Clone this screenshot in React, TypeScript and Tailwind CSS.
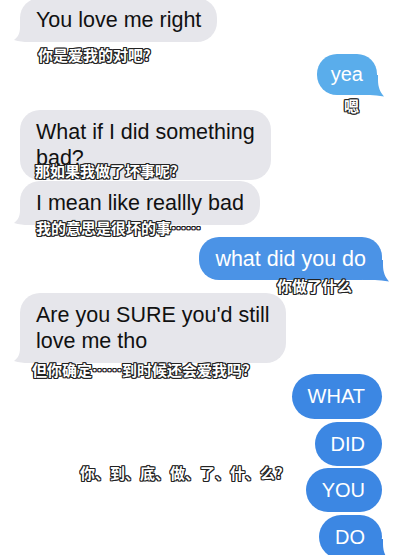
import React from 'react';

const caption =
  "relative z-10 font-bold text-white text-[15px] leading-4 whitespace-nowrap [font-family:'Noto_Sans_CJK_SC',sans-serif] [text-shadow:-1px_-1px_0_#222,1px_-1px_0_#222,-1px_1px_0_#222,1px_1px_0_#222,0_1px_0_#222,0_-1px_0_#222,1px_0_0_#222,-1px_0_0_#222]";

function LeftTail({ color }: { color: string }) {
  return (
    <svg className="absolute left-[-6px] bottom-0" width="26" height="20" viewBox="0 0 26 20">
      <path d="M6 0 H26 V20 H14 C10 20 5 19.5 0 18 C4 15 6 11 6 5 Z" fill={color} />
    </svg>
  );
}

function RightTail({ color }: { color: string }) {
  return (
    <svg className="absolute right-[-7px] bottom-[-2px]" width="26" height="22" viewBox="0 0 26 22">
      <path d="M20 0 H0 V20 H12 C16 20 21 21 26 21.5 C22 17 20 12 20 5 Z" fill={color} />
    </svg>
  );
}

function Received({ children, tail, className = '' }: { children: React.ReactNode; tail?: boolean; className?: string }) {
  return (
    <div className={`flex justify-start pl-[20px] ${className}`}>
      <div className="relative bg-[#e6e6eb] text-[#111] rounded-[20px] px-4 py-[9px] text-[21.5px] leading-[26px]">
        {tail && <LeftTail color="#e6e6eb" />}
        <span className="relative">{children}</span>
      </div>
    </div>
  );
}

export default function App() {
  return (
    <div className="w-[400px] h-[555px] overflow-hidden bg-white flex flex-col [font-family:'Liberation_Sans',Arial,sans-serif]">
      <Received tail className="mt-[-2px]">You love me right</Received>
      <div className={`${caption} mt-[5px] pl-[38px]`}>你是爱我的对吧?</div>

      <div className="flex justify-end pr-[23px] mt-[-9px]">
        <div className="relative bg-[#5aadeb] text-white rounded-[20px] px-[14px] py-[8px] text-[20px] leading-[25px]">
          <RightTail color="#5aadeb" />
          <span className="relative">yea</span>
        </div>
      </div>
      <div className={`${caption} mt-[3px] self-end pr-[41px]`}>嗯</div>

      <Received className="mt-[-4px]">
        What if I did something
        <br />
        bad?
      </Received>
      <div className={`${caption} mt-[-17px] pl-[35px]`}>那如果我做了坏事呢?</div>

      <Received tail className="mt-[2px]">I mean like reallly bad</Received>
      <div className={`${caption} mt-[-5px] pl-[36px]`}>我的意思是很坏的事……</div>

      <div className="flex justify-end pr-[18px] mt-[1px]">
        <div className="relative bg-[#4b93e6] text-white rounded-[20px] px-4 py-[8.5px] text-[21.5px] leading-[26px]">
          <RightTail color="#4b93e6" />
          <span className="relative">what did you do</span>
        </div>
      </div>
      <div className={`${caption} mt-[-2px] self-end pr-[48px]`}>你做了什么</div>

      <Received tail className="mt-[-1px]">
        Are you SURE you'd still
        <br />
        love me tho
      </Received>
      <div className={`${caption} mt-[-1px] pl-[32px]`}>但你确定……到时候还会爱我吗?</div>

      <div className="flex justify-end pr-[18px] mt-[-4px]">
        <div className="bg-[#3c87e3] text-white rounded-full pl-4 pr-[17px] py-[10px] text-[20px] leading-[25px]">WHAT</div>
      </div>
      <div className="flex justify-end pr-[18px] mt-[3px]">
        <div className="bg-[#3c87e3] text-white rounded-full pl-4 pr-[17px] py-[9.5px] text-[20px] leading-[25px]">DID</div>
      </div>
      <div className="flex items-start pr-[18px] mt-[2px]">
        <div className={`${caption} ml-[80px] mt-[-3px]`}>你、到、底、做、了、什、么?</div>
        <div className="ml-auto bg-[#3c87e3] text-white rounded-full pl-4 pr-[17px] py-[9.5px] text-[20px] leading-[25px]">YOU</div>
      </div>
      <div className="flex justify-end pr-[18px] mt-[3px]">
        <div className="relative bg-[#3c87e3] text-white rounded-[22px] pl-4 pr-[17px] py-[9.5px] text-[20px] leading-[25px]">
          <RightTail color="#3c87e3" />
          <span className="relative">DO</span>
        </div>
      </div>
    </div>
  );
}
